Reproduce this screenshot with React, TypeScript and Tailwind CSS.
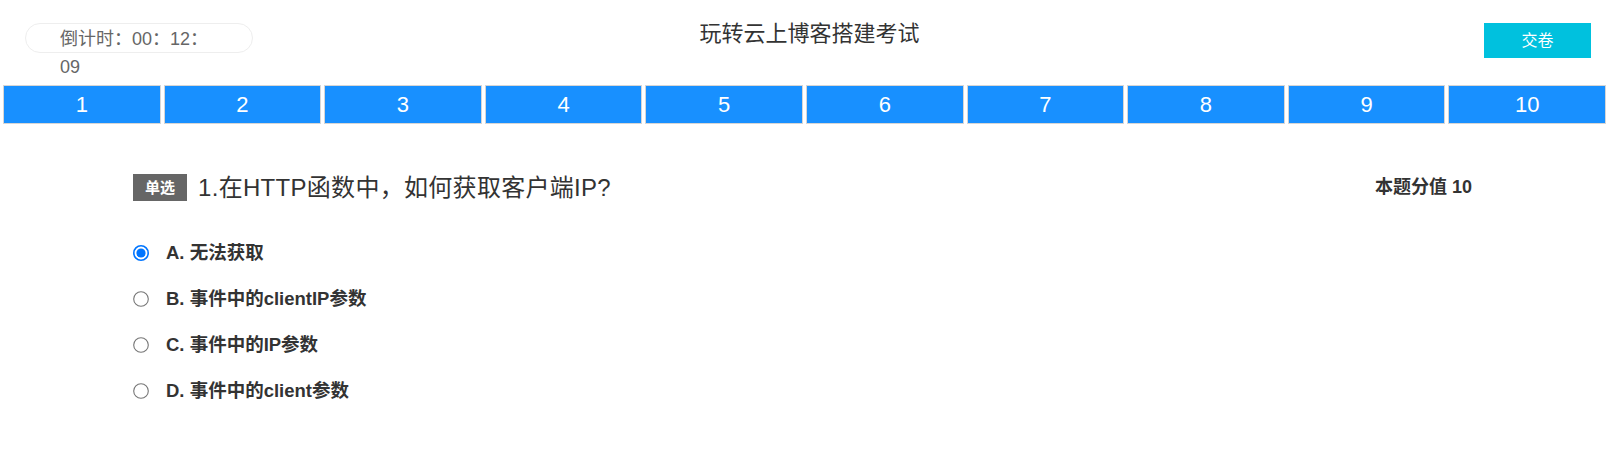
import React from "react";

const font = { fontFamily: '"Liberation Sans", "Noto Sans CJK SC", sans-serif' };

function Radio({ checked }: { checked: boolean }) {
  return (
    <svg width="16" height="16" viewBox="0 0 16 16" className="shrink-0">
      {checked ? (
        <>
          <circle cx="8" cy="8" r="7.2" fill="#fff" stroke="#0075ff" strokeWidth="1.6" />
          <circle cx="8" cy="8" r="4.6" fill="#0075ff" />
        </>
      ) : (
        <circle cx="8" cy="8" r="7.3" fill="#fff" stroke="#767676" strokeWidth="1.1" />
      )}
    </svg>
  );
}

export default function App() {
  const nums = [1, 2, 3, 4, 5, 6, 7, 8, 9, 10];
  const options = [
    { label: "A. 无法获取", checked: true },
    { label: "B. 事件中的clientIP参数", checked: false },
    { label: "C. 事件中的IP参数", checked: false },
    { label: "D. 事件中的client参数", checked: false },
  ];
  return (
    <div className="w-[1607px] h-[453px] bg-white overflow-hidden" style={font}>
      {/* header */}
      <div className="flex h-[85px]">
        <div className="flex-1 pl-[25px] pt-[23px]">
          <div className="w-[228px] h-[30px] rounded-full border border-[#eeeeee] pl-[34px] pt-[1px] text-[18px] leading-[28px] text-[#666666] whitespace-nowrap">
            <div>倒计时：00：12：</div>
            <div>09</div>
          </div>
        </div>
        <div className="pt-[19px] pl-[3px] text-[22px] leading-[30px] text-[#333333] whitespace-nowrap">
          玩转云上博客搭建考试
        </div>
        <div className="flex-1 flex justify-end pr-[16px] pt-[23px]">
          <button className="w-[107px] h-[35px] bg-[#00c1de] text-white text-[16px] leading-[35px]">
            交卷
          </button>
        </div>
      </div>

      {/* number bar */}
      <div className="flex gap-[3px] pl-[3px] pr-[1px]">
        {nums.map((n) => (
          <div
            key={n}
            className="flex-1 h-[39px] border border-[#d6d6d6] bg-[#1890ff] text-white text-[22px] flex items-center justify-center"
          >
            {n}
          </div>
        ))}
      </div>

      {/* question */}
      <div className="pl-[133px] pr-[135px] pt-[50px]">
        <div className="flex items-center justify-between h-[27px]">
          <div className="flex items-center">
            <span className="h-[27px] px-[12px] bg-[#666666] text-white text-[15px] font-bold leading-[27px]">
              单选
            </span>
            <span className="ml-[11px] text-[24px] tracking-[0.3px] text-[#333333] leading-[30px] whitespace-nowrap">
              1.在HTTP函数中，如何获取客户端IP?
            </span>
          </div>
          <div className="text-[18px] font-bold text-[#333333] whitespace-nowrap">本题分值 10</div>
        </div>

        <div className="mt-[29px] flex flex-col">
          {options.map((o) => (
            <div key={o.label} className="h-[46px] flex items-center">
              <Radio checked={o.checked} />
              <span className="ml-[17px] text-[18.5px] font-bold text-[#333333] whitespace-nowrap">
                {o.label}
              </span>
            </div>
          ))}
        </div>
      </div>
    </div>
  );
}
